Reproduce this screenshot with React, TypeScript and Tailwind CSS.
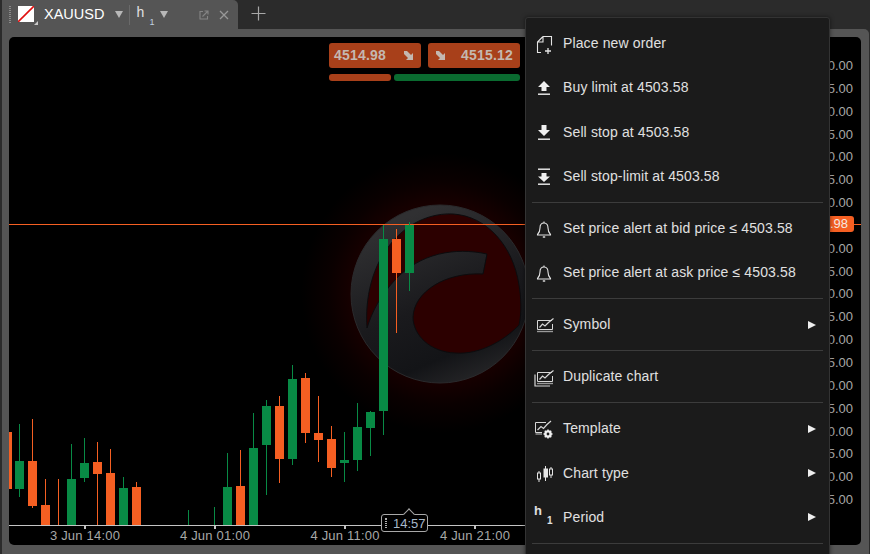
const UP = '#088a45';
const DOWN = '#f55f22';

// x of body left, wick top, wick bottom, body top, body bottom, colour
const CANDLES: [number, number, number, number, number, string][] = [
  [3, 432, 489, 432, 489, DOWN],
  [15, 424, 497, 461, 489, UP],
  [28, 419, 508, 461, 506, DOWN],
  [41, 479, 525, 505, 525, DOWN],
  [54, 479, 525, 525, 525, DOWN],
  [67, 444, 525, 479, 525, UP],
  [80, 438, 482, 463, 478, UP],
  [93, 442, 525, 462, 474, DOWN],
  [106, 449, 525, 473, 525, DOWN],
  [119, 477, 525, 488, 525, UP],
  [132, 482, 525, 487, 525, DOWN],
  [184, 510, 525, 525, 525, UP],
  [210, 507, 525, 525, 525, UP],
  [223, 453, 525, 487, 525, UP],
  [236, 450, 525, 486, 525, DOWN],
  [249, 413, 525, 448, 525, UP],
  [262, 400, 495, 406, 445, UP],
  [275, 396, 483, 406, 459, DOWN],
  [288, 365, 465, 379, 459, UP],
  [301, 373, 443, 378, 433, DOWN],
  [314, 396, 462, 433, 440, DOWN],
  [327, 426, 477, 439, 468, DOWN],
  [340, 432, 482, 460, 463, UP],
  [353, 403, 471, 427, 460, UP],
  [366, 411, 456, 412, 428, UP],
  [379, 225, 435, 239, 411, UP],
  [392, 229, 333, 239, 273, DOWN],
  [405, 222, 291, 225, 273, UP],
];

const PRICES = Array.from({ length: 20 }, (_, i) => (4550 - i * 5).toFixed(2));

function ChartFrame({ extra }: { extra?: boolean }) {
  return (
    <g fill="none" stroke="#d8d8d8">
      <path d="M18 5.5H3.5V14.5H18.5V9" strokeWidth="1" />
      <path d="M3 16.5H19" stroke="#999" strokeWidth="1.4" />
      <path d="M5.5 12.5L8.5 9L11 11L14.5 7.5L19.5 3.5" strokeWidth="1.2" />
      {extra && <path d="M1 7.5V19H16" strokeWidth="1.2" />}
    </g>
  );
}

function MenuIcon({ name }: { name: string }) {
  if (name === 'period') {
    return (
      <div className="relative w-5 h-5 font-bold text-[#e0e0e0] leading-none">
        <span className="absolute left-[0px] top-[-3px] text-[13px]">h</span>
        <span className="absolute left-[13px] top-[9px] text-[10px]">1</span>
      </div>
    );
  }
  return (
    <svg width="20" height="20" viewBox="0 0 20 20" fill="none">
      {name === 'order' && (
        <g stroke="#e4e4e4" strokeWidth="1.1">
          <path d="M9 2.5H17.5V11.5M9 2.5L3.5 8V18.5H7M9 2.5V8H3.5" />
          <path d="M14 14V20M11 17H17" strokeWidth="1.3" />
        </g>
      )}
      {name === 'buy' && (
        <g fill="#f0f0f0">
          <path d="M10 3L16 9H12.5V13H7.5V9H4Z" />
          <rect x="4" y="15.5" width="12" height="1.4" />
        </g>
      )}
      {name === 'sell' && (
        <g fill="#f0f0f0">
          <path d="M7.5 3H12.5V8H16L10 14L4 8H7.5Z" />
          <rect x="4" y="16.5" width="12" height="1.4" />
        </g>
      )}
      {name === 'stoplimit' && (
        <g fill="#f0f0f0">
          <rect x="4" y="1.5" width="12" height="1.4" />
          <path d="M7.5 6H12.5V9.5H16L10 15L4 9.5H7.5Z" />
          <rect x="4" y="16.5" width="12" height="1.4" />
        </g>
      )}
      {name === 'bell' && (
        <g stroke="#e4e4e4" strokeWidth="1.1">
          <path d="M10 4C7 4 6 6.5 6 9C6 12 5 14 3.5 15.5V16H16.5V15.5C15 14 14 12 14 9C14 6.5 13 4 10 4Z" />
          <path d="M10 2.5V4" />
          <path d="M8.8 18H11.2" strokeWidth="1.4" />
        </g>
      )}
      {name === 'chart' && <ChartFrame />}
      {name === 'duplicate' && <ChartFrame extra />}
      {name === 'template' && (
        <g>
          <g stroke="#d8d8d8" fill="none">
            <path d="M12 3.5H1.5V13.5H8" strokeWidth="1" />
            <path d="M1.5 15H8" stroke="#999" strokeWidth="1.4" />
            <path d="M3.5 11L7 7.5L9.5 9.5L13 5.5L17 2" strokeWidth="1.2" />
          </g>
          <circle cx="14" cy="15" r="2.6" fill="none" stroke="#f0f0f0" strokeWidth="2.4" />
          <path d="M14 10.5V12M14 18V19.5M9.5 15H11M17 15H18.5M10.8 11.8L11.9 12.9M16.1 17.1L17.2 18.2M10.8 18.2L11.9 17.1M16.1 12.9L17.2 11.8" stroke="#f0f0f0" strokeWidth="1.5" />
        </g>
      )}
      {name === 'candles' && (
        <g stroke="#e4e4e4" strokeWidth="1">
          <path d="M5 8V19M11.5 3V18M17 4V15" />
          <rect x="3.5" y="10" width="3" height="6" fill="#1b1b1b" />
          <rect x="10" y="6" width="3.5" height="8" fill="#e4e4e4" />
          <rect x="15.5" y="6" width="3" height="6" fill="#1b1b1b" />
        </g>
      )}
    </svg>
  );
}

function MenuRow({ icon, label, sub }: { icon: string; label: string; sub?: boolean }) {
  return (
    <div className="flex items-center h-[44.33px] pl-[8px] pr-[13px]">
      <MenuIcon name={icon} />
      <span className="ml-[9px] flex-1 text-[14px] tracking-[0.13px] text-[#e0e0e0] whitespace-nowrap">{label}</span>
      {sub && <span className="w-0 h-0 border-y-[4px] border-y-transparent border-l-[8px] border-l-[#eeeeee]" />}
    </div>
  );
}

const Sep = () => <div className="h-px bg-[#3c3c3c] mx-[6px] my-[3.33px]" />;

function Logo() {
  return (
    <g>
      <defs>
        <radialGradient id="glow" gradientUnits="userSpaceOnUse" cx="441" cy="293" r="140">
          <stop offset="0" stopColor="#200000" />
          <stop offset="0.6" stopColor="#1a0000" />
          <stop offset="0.8" stopColor="#0a0000" />
          <stop offset="1" stopColor="#000000" />
        </radialGradient>
        <linearGradient id="disc" gradientUnits="userSpaceOnUse" x1="400" y1="220" x2="470" y2="385">
          <stop offset="0" stopColor="#303032" />
          <stop offset="0.5" stopColor="#1a1a1d" />
          <stop offset="0.8" stopColor="#131417" />
          <stop offset="1" stopColor="#262628" />
        </linearGradient>
      </defs>
      <circle cx="441" cy="293" r="140" fill="url(#glow)" />
      <circle cx="440" cy="294" r="89" fill="url(#disc)" stroke="#2a2a2c" strokeWidth="1" />
      <path
        d="M367 328C365 300 371 265 394 240C411 221 433 213 453 214C486 216 513 245 519 285C521 297 522 312 519 325C505 340 480 355 455 353C430 352 413 335 413 317C414 292 445 272 483 274L487 254C455 247 420 253 395 280C380 296 372 312 367 328Z"
        fill="#2c0000"
        stroke="#0c0c0e"
        strokeWidth="1"
      />
    </g>
  );
}

export default function App() {
  return (
    <div className="relative flex flex-col w-[870px] h-[554px] overflow-hidden bg-[#2b2b2b] font-['Liberation_Sans',Arial,sans-serif]">
      {/* tab bar */}
      <div className="flex items-stretch h-[29px]">
        <div className="flex items-center w-[236px] ml-[2px] pl-[7px] bg-[#555555] rounded-tr-[5px]">
          <div className="w-[2px] h-[17px] border-x border-dotted border-[#8a8a8a] mr-[7px]" />
          <div className="relative w-[16px] h-[16px] bg-white overflow-hidden mb-[1px]">
            <svg width="16" height="16" viewBox="0 0 16 16">
              <path d="M0 16L16 0" stroke="#e01010" strokeWidth="1.6" />
            </svg>
          </div>
          <div className="w-0 h-0 self-end mb-[4px] border-b-[4px] border-b-[#c8c8c8] border-l-[4px] border-l-transparent" />
          <span className="ml-[6px] text-[14.5px] text-white leading-none">XAUUSD</span>
          <span className="ml-[11px] w-0 h-0 border-x-[4px] border-x-transparent border-t-[7px] border-t-[#b8b8b8]" />
          <div className="ml-[6px] w-px h-[20px] bg-[#6a6a6a]" />
          <div className="relative ml-[6px] w-[19px] h-[24px] text-[#e0e0e0] leading-none">
            <span className="absolute left-0 top-[2px] text-[14px]">h</span>
            <span className="absolute left-[13px] top-[15px] text-[9px] text-[#c0d0e0]">1</span>
          </div>
          <span className="ml-[5px] w-0 h-0 border-x-[4px] border-x-transparent border-t-[7px] border-t-[#b8b8b8]" />
          <svg className="ml-[31px]" width="10" height="10" viewBox="0 0 10 10" fill="none" stroke="#858585" strokeWidth="1.1">
            <path d="M4 1.5H1V9H8.5V6" />
            <path d="M3.5 6.5L8.5 1.5M5.5 1H9V4.5" />
          </svg>
          <svg className="ml-[10px]" width="10" height="10" viewBox="0 0 10 10" stroke="#989898" strokeWidth="1.3">
            <path d="M1 1L9 9M9 1L1 9" />
          </svg>
        </div>
        <svg className="ml-[13px] mt-[6px]" width="15" height="15" viewBox="0 0 15 15" stroke="#a8a8a8" strokeWidth="1.2">
          <path d="M7.5 0.5V14.5M0.5 7.5H14.5" />
        </svg>
      </div>

      {/* chart panel */}
      <div className="flex flex-1 ml-[2px] mr-px pt-[8px] pl-[7px] pr-[8px] pb-[9px] bg-[#555555] rounded-tr-[5px]">
        <div className="relative flex-1 bg-black rounded-[5px] overflow-hidden">
          <svg className="absolute left-0 top-0" width="852" height="508" viewBox="9 37 852 508">
            <Logo />
            <path d="M9 224.5H861" stroke={DOWN} strokeWidth="1" />
            {CANDLES.map(([x, wt, wb, bt, bb, c]) => (
              <g key={x} fill={c}>
                <rect x={x + 4} y={wt} width="1" height={wb - wt} />
                <rect x={x} y={bt} width="9" height={bb - bt} />
              </g>
            ))}
            <path d="M9 525.5H525" stroke="#c4c4c4" strokeWidth="1" />
            <path d="M85 526V529M215 526V529M345 526V529M475 526V529" stroke="#c4c4c4" strokeWidth="2" />
          </svg>

          {/* bid / ask boxes */}
          <div className="absolute left-[320px] top-[6px] w-[191px] flex flex-col gap-[6px]">
            <div className="flex gap-[7px]">
              <div className="flex w-[92px] items-center justify-between h-[25px] px-[5px] rounded-[3px] bg-[#a8401a] text-[14px] font-bold tracking-[0.2px] text-[#c4b8b0]">
                <span>4514.98</span>
                <svg width="14" height="12" viewBox="0 0 14 12" fill="#c4b8b0"><path d="M2 1H5L9 5L11 3V10H4L6 8L2 4Z" /></svg>
              </div>
              <div className="flex w-[92px] items-center justify-between h-[25px] px-[7px] rounded-[3px] bg-[#a8401a] text-[14px] font-bold tracking-[0.2px] text-[#c4b8b0]">
                <svg width="14" height="12" viewBox="0 0 14 12" fill="#c4b8b0"><path d="M1 1H4L8 5L10 3V10H3L5 8L1 4Z" /></svg>
                <span>4515.12</span>
              </div>
            </div>
            <div className="flex gap-[3px] h-[7px]">
              <div className="w-[62px] rounded-[3px] bg-[#a8401a]" />
              <div className="flex-1 rounded-[3px] bg-[#0a6b30]" />
            </div>
          </div>

          {/* price axis */}
          <div className="absolute right-[8px] top-[18px] flex flex-col items-end text-[13px] leading-[22.85px] text-[#a8a8a8]">
            {PRICES.map((p, i) => (
              <span key={p}>{i === 7 ? '\u00a0' : p}</span>
            ))}
          </div>
          <div className="absolute right-[7px] top-[179px] pl-[3px] pr-[6px] h-[16px] rounded-[3px] bg-[#f55f22] text-[13px] leading-[16px] text-[#f4e8e0]">
            4514.98
          </div>

          {/* time axis */}
          <div className="absolute left-[11px] top-[492px] grid grid-cols-[repeat(4,130px)] text-center text-[13px] tracking-[0.2px] leading-[14px] text-[#a8a8a8]">
            <span>3 Jun 14:00</span>
            <span>4 Jun 01:00</span>
            <span>4 Jun 11:00</span>
            <span>4 Jun 21:00</span>
          </div>

          {/* crosshair time */}
          <div className="absolute left-[372px] top-[477px] flex items-center w-[47px] h-[18px] border border-[#a8a8a8] rounded-[3px] bg-black text-[13px] leading-none text-[#a8b8c8]">
            <div className="absolute left-[23px] top-[-5px] w-[8px] h-[8px] rotate-45 bg-black border-l border-t border-[#a8a8a8]" />
            <div className="ml-[3px] w-[2px] h-[10px] border-x border-dotted border-[#b0b0b0]" />
            <span className="relative ml-[6px]">14:57</span>
          </div>
        </div>
      </div>

      {/* context menu */}
      <div className="absolute left-[525px] top-[17px] w-[305px] h-[560px] pt-[3.4px] bg-[#1b1b1b] border border-[#333333] rounded-[3px] shadow-[0_0_4px_rgba(0,0,0,0.5)]">
        <MenuRow icon="order" label="Place new order" />
        <MenuRow icon="buy" label="Buy limit at 4503.58" />
        <MenuRow icon="sell" label="Sell stop at 4503.58" />
        <MenuRow icon="stoplimit" label="Sell stop-limit at 4503.58" />
        <Sep />
        <MenuRow icon="bell" label="Set price alert at bid price ≤ 4503.58" />
        <MenuRow icon="bell" label="Set price alert at ask price ≤ 4503.58" />
        <Sep />
        <MenuRow icon="chart" label="Symbol" sub />
        <Sep />
        <MenuRow icon="duplicate" label="Duplicate chart" />
        <Sep />
        <MenuRow icon="template" label="Template" sub />
        <MenuRow icon="candles" label="Chart type" sub />
        <MenuRow icon="period" label="Period" sub />
        <Sep />
      </div>
    </div>
  );
}
